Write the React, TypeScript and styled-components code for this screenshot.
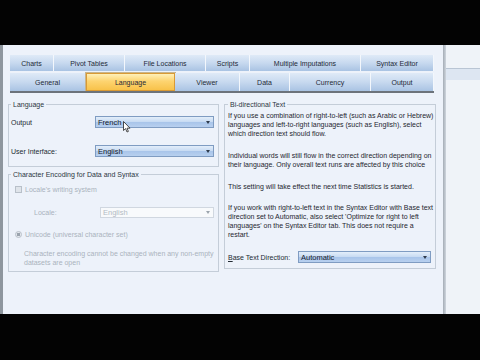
import React from "react";
import styled, { createGlobalStyle } from "styled-components";

const Global = createGlobalStyle`
  html, body { margin: 0; padding: 0; background: #000; }
  body { width: 480px; height: 360px; overflow: hidden; font-family: "Liberation Sans", Arial, sans-serif; }
`;

const Screen = styled.div`
  width: 480px;
  height: 360px;
  display: flex;
  flex-direction: column;
  background: #000;
`;

const Letterbox = styled.div<{ $h: number }>`
  height: ${(p) => p.$h}px;
  flex: none;
  background: #030303;
`;

const Stage = styled.div`
  height: 269px;
  flex: none;
  display: flex;
  background: #eef2f8;
`;

const Dialog = styled.div`
  width: 440px;
  flex: none;
  border-left: 3px solid #8e969e;
  background: #edf2fa;
  display: flex;
  flex-direction: column;
`;

const Shadow = styled.div`
  width: 3px;
  flex: none;
  background: linear-gradient(to right, #a4acb5, #cfd6de);
`;

const Side = styled.div`
  flex: 1;
  background: #eff3f8;
`;

const SideBand = styled.div`
  margin-top: 23px;
  height: 11px;
  border-top: 1px solid #b9c5d4;
  background: #dde6f2;
`;

const TabStrip = styled.div`
  margin: 10px 0 0 7px;
  width: 424px;
  display: flex;
  flex-direction: column;
  gap: 2px;
`;

const TabRow = styled.div<{ $h: number }>`
  display: flex;
  height: ${(p) => p.$h}px;
`;

const Tab = styled.div<{ $w: number; $active?: boolean }>`
  width: ${(p) => p.$w}px;
  flex: none;
  box-sizing: border-box;
  display: flex;
  align-items: center;
  justify-content: center;
  font-size: 7px;
  color: #1f2a38;
  white-space: nowrap;
  border-right: 1px solid #f3f7fc;
  background: ${(p) =>
    p.$active
      ? "linear-gradient(to bottom, #fff0b8 0%, #fdd470 45%, #f8c24a 100%)"
      : "linear-gradient(to bottom, #dfeaf7 0%, #c7d9ef 50%, #a9c3e3 100%)"};
  ${(p) => (p.$active ? "border: 1px solid #d99a35; box-shadow: 0 0 0 1px #c7b58e;" : "")}
`;

const TabBase = styled.div`
  margin-left: 7px;
  width: 424px;
  height: 2px;
  background: #6c737b;
`;

const Body = styled.div`
  margin: 7px 0 0 5px;
  display: grid;
  grid-template-columns: 211px 212px;
  column-gap: 5px;
  align-items: start;
`;

const Column = styled.div`
  display: flex;
  flex-direction: column;
  gap: 3px;
`;

const Group = styled.fieldset<{ $h: number; $pl: number }>`
  margin: 0;
  padding: 0 4px 0 ${(p) => p.$pl}px;
  border: 1px solid #c4cdd8;
  height: ${(p) => p.$h}px;
  box-sizing: border-box;
  min-width: 0;
`;

const Legend = styled.legend`
  font-size: 7px;
  line-height: 9px;
  padding: 0 2px;
  color: #2c3642;
  white-space: nowrap;
`;

const FieldRow = styled.div<{ $mt: number; $indent?: number }>`
  display: flex;
  align-items: center;
  height: 12px;
  margin-top: ${(p) => p.$mt}px;
  padding-left: ${(p) => p.$indent ?? 0}px;
`;

const FieldLabel = styled.span<{ $w: number; $disabled?: boolean }>`
  width: ${(p) => p.$w}px;
  flex: none;
  font-size: 7px;
  color: ${(p) => (p.$disabled ? "#aab3bd" : "#222a33")};
  white-space: nowrap;
`;

const Select = styled.div<{ $w: number; $h: number; $disabled?: boolean }>`
  position: relative;
  width: ${(p) => p.$w}px;
  height: ${(p) => p.$h}px;
  box-sizing: border-box;
  display: flex;
  align-items: center;
  padding-left: 2px;
  font-size: 7.5px;
  color: ${(p) => (p.$disabled ? "#b3bbc4" : "#16202c")};
  border: 1px solid ${(p) => (p.$disabled ? "#d0d7e0" : "#7f9cc2")};
  background: ${(p) =>
    p.$disabled
      ? "#f8fafc"
      : "linear-gradient(to bottom, #e3eefa 0%, #c9dcf3 45%, #a9c5ea 55%, #b8d0ef 100%)"};
`;

const Arrow = styled.span<{ $disabled?: boolean }>`
  position: absolute;
  right: 3px;
  top: 50%;
  margin-top: -1px;
  width: 0;
  height: 0;
  border-left: 2.5px solid transparent;
  border-right: 2.5px solid transparent;
  border-top: 3px solid ${(p) => (p.$disabled ? "#9ca5ae" : "#2e3b4c")};
`;

const Cursor = styled.svg`
  position: absolute;
  left: 27px;
  top: 4px;
`;

const OptionRow = styled.div<{ $mt: number }>`
  display: flex;
  align-items: center;
  gap: 3px;
  height: 9px;
  margin-top: ${(p) => p.$mt}px;
  padding-left: 4px;
  font-size: 7px;
  color: #aab3bd;
  white-space: nowrap;
`;

const CheckBox = styled.span`
  width: 5px;
  height: 5px;
  border: 1px solid #b8c0c9;
  background: #dfe4ea;
`;

const Radio = styled.span`
  width: 5px;
  height: 5px;
  border-radius: 50%;
  border: 1px solid #b8c0c9;
  background: radial-gradient(circle, #9aa3ad 0 1.5px, #e4e8ed 2px);
`;

const Note = styled.p`
  margin: 10px 0 0 13px;
  font-size: 7px;
  line-height: 9px;
  color: #aab3bd;
  white-space: nowrap;
`;

const Para = styled.p<{ $mt: number }>`
  margin: ${(p) => p.$mt}px 0 0 0;
  font-size: 7px;
  line-height: 9px;
  color: #1e2630;
  white-space: nowrap;
`;

const Underline = styled.span`
  text-decoration: underline;
`;

const row1 = [
  ["Charts", 44],
  ["Pivot Tables", 71],
  ["File Locations", 81],
  ["Scripts", 44],
  ["Multiple Imputations", 111],
  ["Syntax Editor", 73],
] as const;

const row2 = [
  ["General", 76],
  ["Language", 89],
  ["Viewer", 65],
  ["Data", 50],
  ["Currency", 81],
  ["Output", 63],
] as const;

export default function App() {
  return (
    <Screen>
      <Global />
      <Letterbox $h={45} />
      <Stage>
        <Dialog>
          <TabStrip>
            <TabRow $h={16}>
              {row1.map(([t, w]) => (
                <Tab key={t} $w={w}>{t}</Tab>
              ))}
            </TabRow>
            <TabRow $h={18}>
              {row2.map(([t, w]) => (
                <Tab key={t} $w={w} $active={t === "Language"}>{t}</Tab>
              ))}
            </TabRow>
          </TabStrip>
          <TabBase />
          <Body>
            <Column>
              <Group $h={67} $pl={2}>
                <Legend>Language</Legend>
                <FieldRow $mt={7}>
                  <FieldLabel $w={84}>Output</FieldLabel>
                  <Select $w={119} $h={12}>
                    French
                    <Arrow />
                    <Cursor width="8" height="12" viewBox="0 0 8 12">
                      <path d="M0.5 0.5 L0.5 9.5 L2.6 7.6 L4 11 L5.4 10.4 L4 7.2 L7 7.2 Z" fill="#fff" stroke="#222" strokeWidth="0.8" strokeLinejoin="round" />
                    </Cursor>
                  </Select>
                </FieldRow>
                <FieldRow $mt={17}>
                  <FieldLabel $w={84}>User Interface:</FieldLabel>
                  <Select $w={119} $h={12}>
                    English
                    <Arrow />
                  </Select>
                </FieldRow>
              </Group>
              <Group $h={102} $pl={2}>
                <Legend>Character Encoding for Data and Syntax</Legend>
                <OptionRow $mt={6}>
                  <CheckBox />
                  Locale's writing system
                </OptionRow>
                <FieldRow $mt={12} $indent={23}>
                  <FieldLabel $w={66} $disabled>Locale:</FieldLabel>
                  <Select $w={115} $h={11} $disabled>
                    English
                    <Arrow $disabled />
                  </Select>
                </FieldRow>
                <OptionRow $mt={12}>
                  <Radio />
                  Unicode (universal character set)
                </OptionRow>
                <Note>
                  Character encoding cannot be changed when any non-empty
                  <br />
                  datasets are open
                </Note>
              </Group>
            </Column>
            <Group $h={169} $pl={3}>
              <Legend>Bi-directional Text</Legend>
              <Para $mt={2}>
                If you use a combination of right-to-left (such as Arabic or Hebrew)
                <br />
                languages and left-to-right languages (such as English), select
                <br />
                which direction text should flow.
              </Para>
              <Para $mt={13}>
                Individual words will still flow in the correct direction depending on
                <br />
                their language. Only overall text runs are affected by this choice
              </Para>
              <Para $mt={13}>
                This setting will take effect the next time Statistics is started.
              </Para>
              <Para $mt={12}>
                If you work with right-to-left text in the Syntax Editor with Base text
                <br />
                direction set to Automatic, also select 'Optimize for right to left
                <br />
                languages' on the Syntax Editor tab. This does not require a
                <br />
                restart.
              </Para>
              <FieldRow $mt={12}>
                <FieldLabel $w={70}>
                  <Underline>B</Underline>ase Text Direction:
                </FieldLabel>
                <Select $w={134} $h={12}>
                  Automatic
                  <Arrow />
                </Select>
              </FieldRow>
            </Group>
          </Body>
        </Dialog>
        <Shadow />
        <Side>
          <SideBand />
        </Side>
      </Stage>
      <Letterbox $h={46} />
    </Screen>
  );
}
